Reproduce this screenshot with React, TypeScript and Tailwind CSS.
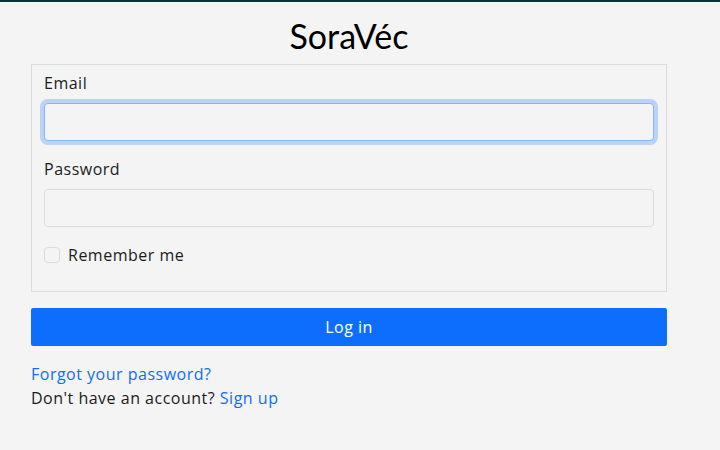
export default function App() {
  return (
    <div className="min-h-[450px] w-full bg-[#f4f4f4] border-t-2 border-[#06343c] font-['Open_Sans',sans-serif] text-[16px] tracking-[0.5px] text-[#1b1b1b]">
      <div className="ml-[31px] w-[636px] pt-[12px]">
        <h1 className="text-center text-[34px] leading-[44px] tracking-normal font-['Lato',sans-serif] text-black">SoraVéc</h1>

        {/* card */}
        <div className="mt-[6px] border border-[#dcdcdc] px-3 pt-[6px] pb-[24px]">
          <label className="block leading-[24px]">Email</label>
          <input
            type="email"
            className="mt-[8px] block h-[38px] w-full rounded-[4px] border border-[#86b7fe] bg-[#f4f4f4] px-3 outline-none shadow-[0_0_0_4px_rgba(13,110,253,0.25)]"
          />
          <label className="mt-[16px] block leading-[24px]">Password</label>
          <input
            type="password"
            className="mt-[8px] block h-[38px] w-full rounded-[4px] border border-[#dcdcdc] bg-[#f4f4f4] px-3 outline-none"
          />
          <div className="mt-[16px] flex items-center gap-[8px] leading-[24px]">
            <span className="h-[16px] w-[16px] rounded-[4px] border border-[#dcdcdc] bg-[#f4f4f4]" />
            <span>Remember me</span>
          </div>
        </div>

        <button className="mt-[16px] h-[38px] w-full rounded-[2px] bg-[#0d6efd] tracking-[0.5px] text-white">Log in</button>

        <div className="mt-[16px] leading-[24px]">
          <a className="text-[#0d6efd]">Forgot your password?</a>
        </div>
        <div className="leading-[24px]">
          Don't have an account? <a className="text-[#0d6efd]">Sign up</a>
        </div>
      </div>
    </div>
  );
}
